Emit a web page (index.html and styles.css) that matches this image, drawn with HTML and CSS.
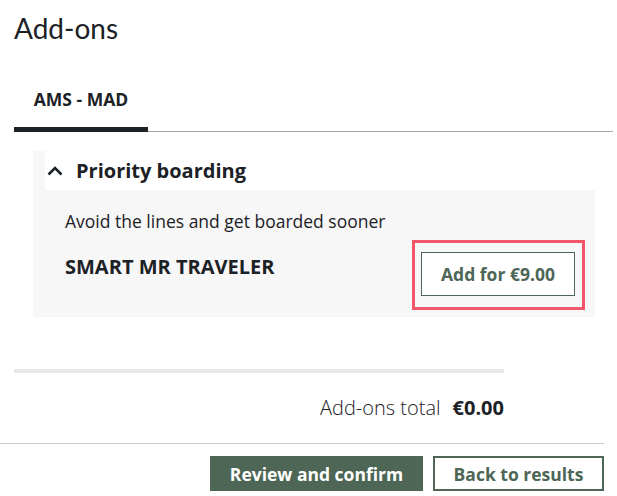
FILE: index.html
```html
<!DOCTYPE html>
<html lang="en">
<head>
    <meta charset="UTF-8">
    <meta name="viewport" content="width=device-width, initial-scale=1.0">
    <title>Add-ons</title>
    <link rel="stylesheet" href="styles.css">
</head>
<body>
    <main class="addons">
        <h1 class="addons-title">Add-ons</h1>

        <!-- Flight tabs -->
        <div class="tabs">
            <button class="tab active">AMS - MAD</button>
        </div>

        <!-- Priority boarding panel -->
        <section class="panel">
            <div class="panel-head">
                <svg class="chevron" width="16" height="10" viewBox="0 0 16 10">
                    <path d="M1.5 8.5 L8 2 L14.5 8.5" fill="none" stroke="#1c2126" stroke-width="2.6"/>
                </svg>
                <h2>Priority boarding</h2>
            </div>
            <div class="panel-body">
                <p class="panel-desc">Avoid the lines and get boarded sooner</p>
                <div class="passenger">
                    <span class="passenger-name">SMART MR TRAVELER</span>
                    <div class="highlight">
                        <button class="btn-outline">Add for €9.00</button>
                    </div>
                </div>
            </div>
        </section>

        <div class="progress"></div>

        <div class="total">
            <span>Add-ons total</span>
            <strong>€0.00</strong>
        </div>
    </main>

    <footer class="actions">
        <button class="btn-primary">Review and confirm</button>
        <button class="btn-secondary">Back to results</button>
    </footer>
</body>
</html>
```

FILE: styles.css
```css
/* Reset */
* {
    margin: 0;
    padding: 0;
    box-sizing: border-box;
}

body {
    font-family: "Open Sans", Arial, sans-serif;
    color: #1c2126;
    background-color: #ffffff;
}

button {
    font-family: inherit;
    cursor: pointer;
}

.addons {
    padding: 0 4px 0 14px;
}

.addons-title {
    font-family: Lato, "Open Sans", sans-serif;
    font-weight: 400;
    font-size: 28px;
    line-height: 32px;
    padding-top: 12px;
}

/* Tabs */
.tabs {
    margin-top: 41px;
    border-bottom: 1px solid #a6a6a6;
    display: flex;
}

.tab {
    width: 134px;
    height: 47px;
    background: none;
    border: none;
    font-size: 17.5px;
    font-weight: 700;
    color: #1c2126;
    padding-bottom: 14px;
    margin-bottom: -1px;
}

.tab.active {
    border-bottom: 5px solid #1c2126;
}

/* Panel */
.panel {
    margin: 19px 18px 0 19px;
    background-color: #f7f7f7;
    padding-bottom: 7px;
}

.panel-head {
    margin-left: 12px;
    background-color: #ffffff;
    height: 39px;
    display: flex;
    align-items: center;
    gap: 13px;
    padding-left: 2px;
}

.panel-head h2 {
    font-size: 20px;
    font-weight: 700;
}

.panel-body {
    padding: 19px 10px 0 32px;
}

.panel-desc {
    font-size: 17.5px;
    line-height: 24px;
}

.passenger {
    display: flex;
    justify-content: space-between;
    align-items: flex-start;
    margin-top: 7px;
}

.passenger-name {
    font-size: 20px;
    font-weight: 700;
    line-height: 24px;
    margin-top: 15px;
}

.highlight {
    border: 3px solid #f2566b;
    padding: 9px 7px 11px 6px;
}

.btn-outline {
    width: 154px;
    height: 44px;
    background-color: #ffffff;
    border: 1px solid #4d6656;
    color: #4d6656;
    font-size: 17.5px;
    font-weight: 700;
}

/* Totals */
.progress {
    margin-top: 52px;
    width: 490px;
    height: 4px;
    background-color: #e6e6e6;
}

.total {
    width: 490px;
    display: flex;
    justify-content: flex-end;
    align-items: baseline;
    gap: 12px;
    margin-top: 21px;
    font-size: 20px;
    line-height: 28px;
    font-weight: 300;
}

.total strong {
    font-weight: 700;
}

/* Bottom actions */
.actions {
    margin-top: 21px;
    width: 604px;
    border-top: 1px solid #cccccc;
    display: flex;
    justify-content: flex-end;
    gap: 10px;
    padding-top: 12px;
}

.btn-primary {
    width: 213px;
    height: 35px;
    background-color: #4d6656;
    border: none;
    color: #ffffff;
    font-size: 17.5px;
    font-weight: 700;
}

.btn-secondary {
    width: 171px;
    height: 35px;
    background-color: #ffffff;
    border: 2px solid #4d6656;
    color: #4d6656;
    font-size: 17.5px;
    font-weight: 700;
}
```
